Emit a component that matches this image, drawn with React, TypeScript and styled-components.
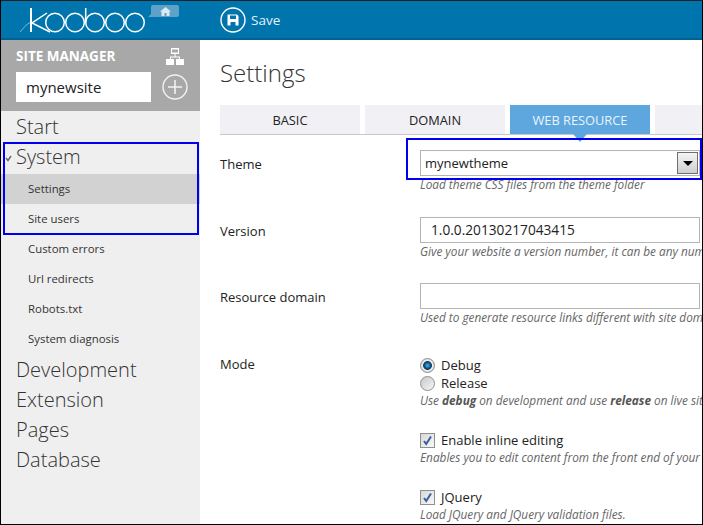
import styled, { createGlobalStyle } from "styled-components";

const GlobalStyle = createGlobalStyle`
  html, body {
    margin: 0;
    padding: 0;
    background: #ffffff;
    font-family: "Open Sans", "Liberation Sans", sans-serif;
  }
  * { box-sizing: border-box; }
`;

const Frame = styled.div`
  position: relative;
  width: 703px;
  height: 525px;
  border: 1px solid #000;
  border-top-color: #222;
  overflow: hidden;
  display: flex;
  flex-direction: column;
`;

const TopBar = styled.header`
  flex: none;
  height: 39px;
  background: #0075ad;
  border-bottom: 2px solid #03618f;
  display: flex;
  align-items: center;
`;

const LogoArea = styled.div`
  position: relative;
  width: 219px;
  height: 100%;
  flex: none;
  padding-left: 19px;
`;

const LogoSvg = styled.svg`
  display: block;
`;

const HomeTag = styled.div`
  position: absolute;
  left: 150px;
  top: 4px;
  width: 28px;
  height: 12px;
  background: #5fa2c9;
  border-radius: 2px;
  display: flex;
  align-items: center;
  justify-content: center;
  &::after {
    content: "";
    position: absolute;
    left: -3px;
    bottom: 0;
    border-bottom: 4px solid #5fa2c9;
    border-left: 4px solid transparent;
  }
`;

const SaveButton = styled.div`
  display: flex;
  align-items: center;
  gap: 5px;
  color: #e6f1f7;
  font-size: 13.5px;
`;

const Body = styled.div`
  flex: 1;
  display: flex;
  min-height: 0;
`;

const Sidebar = styled.aside`
  flex: none;
  width: 199px;
  background: #efefef;
`;

const SiteBox = styled.div`
  height: 71px;
  background: #a8a8a8;
  padding: 9px 0 0 15px;
`;

const SiteHeading = styled.div`
  display: flex;
  align-items: center;
  justify-content: space-between;
  height: 15px;
  padding-right: 16px;
  color: #fff;
  font-size: 13.5px;
  font-weight: 700;
  line-height: 15px;
`;

const SiteRow = styled.div`
  display: flex;
  align-items: center;
  gap: 11px;
  margin-top: 8px;
`;

const SiteName = styled.div`
  flex: none;
  width: 135px;
  height: 30px;
  background: #fff;
  padding-left: 10px;
  color: #222;
  font-size: 15px;
  line-height: 30px;
`;

const Nav = styled.nav`
  display: flex;
  flex-direction: column;
  padding-top: 1px;
`;

const NavTop = styled.div<{ $open?: boolean }>`
  position: relative;
  height: 30px;
  margin-bottom: ${(p) => (p.$open ? 2 : 0)}px;
  padding-left: 15px;
  color: #333;
  font-size: 20px;
  font-weight: 300;
  line-height: 30px;
`;

const OpenMark = styled.svg`
  position: absolute;
  left: 4px;
  top: 13px;
`;

const SubList = styled.div`
  display: flex;
  flex-direction: column;
  padding-bottom: 1px;
`;

const NavSub = styled.div<{ $active?: boolean }>`
  height: 30px;
  padding-left: 27px;
  background: ${(p) => (p.$active ? "#d2d2d2" : "transparent")};
  color: #333;
  font-size: 11.4px;
  line-height: 30px;
`;

const Main = styled.main`
  flex: 1;
  min-width: 0;
  padding: 18px 0 0 20px;
  overflow: hidden;
`;

const PageTitle = styled.h1`
  margin: 0;
  height: 30px;
  color: #333;
  font-size: 24px;
  font-weight: 300;
  line-height: 30px;
`;

const TabBar = styled.div`
  display: flex;
  gap: 5px;
  height: 30px;
  margin-top: 17px;
  border-bottom: 1px solid #c8c8c8;
  width: 520px;
`;

const Tab = styled.div<{ $active?: boolean }>`
  position: relative;
  flex: none;
  width: 140px;
  height: 29px;
  background: ${(p) => (p.$active ? "#5ea7de" : "#f0f0f5")};
  color: ${(p) => (p.$active ? "#eaf4fb" : "#222")};
  font-size: 12.8px;
  line-height: 31px;
  text-align: center;
  ${(p) =>
    p.$active &&
    `&::after {
      content: "";
      position: absolute;
      left: 63px;
      top: 29px;
      border-top: 8px solid #5ea7de;
      border-left: 7px solid transparent;
      border-right: 7px solid transparent;
    }`}
`;

const FieldRow = styled.div<{ $gap: number }>`
  display: grid;
  grid-template-columns: 200px 280px;
  margin-top: ${(p) => p.$gap}px;
`;

const FieldLabel = styled.div<{ $top?: number }>`
  margin-top: ${(p) => p.$top ?? 5}px;
  color: #222;
  font-size: 13px;
  line-height: 18px;
`;

const Control = styled.div`
  display: flex;
  flex-direction: column;
  min-width: 0;
`;

const SelectBox = styled.div`
  display: flex;
  align-items: center;
  justify-content: space-between;
  height: 26px;
  border: 1px solid #b4b4b4;
  background: #fff;
  padding: 0 1px 0 4px;
  color: #222;
  font-size: 13px;
`;

const SelectArrow = styled.div`
  width: 21px;
  height: 22px;
  border: 1px solid #6f6f6f;
  background: linear-gradient(#f4f4f4, #cfcfcf);
  display: flex;
  align-items: center;
  justify-content: center;
  &::after {
    content: "";
    border-top: 5px solid #000;
    border-left: 5px solid transparent;
    border-right: 5px solid transparent;
  }
`;

const TextBox = styled.div`
  height: 26px;
  border: 1px solid #b4b4b4;
  background: #fff;
  padding-left: 10px;
  color: #222;
  font-size: 13.7px;
  line-height: 24px;
`;

const Help = styled.div`
  width: 400px;
  color: #666;
  font-size: 11.8px;
  font-style: italic;
  line-height: 16px;
  white-space: nowrap;
  b {
    color: #555;
  }
`;

const OptionLine = styled.div`
  display: flex;
  align-items: center;
  gap: 6px;
  height: 18px;
  color: #222;
  font-size: 13px;
  white-space: nowrap;
`;

const Radio = styled.span<{ $checked?: boolean }>`
  width: 15px;
  height: 15px;
  border-radius: 50%;
  border: 1px solid #8e8f8f;
  background: ${(p) =>
    p.$checked
      ? "radial-gradient(circle, #2f9fe0 0 1px, #0c4f82 3px, #17395c 4px, #f2f2f2 4.8px, #d4d4d4 7px)"
      : "linear-gradient(135deg, #c8c8c8, #f6f6f6)"};
`;

const Check = styled.span`
  display: flex;
  align-items: center;
  justify-content: center;
  width: 15px;
  height: 15px;
  border: 1px solid #8e8f8f;
  background: linear-gradient(135deg, #d8d8d8, #f8f8f8);
`;

const Highlight = styled.div<{ $l: number; $t: number; $w: number; $h: number }>`
  position: absolute;
  left: ${(p) => p.$l}px;
  top: ${(p) => p.$t}px;
  width: ${(p) => p.$w}px;
  height: ${(p) => p.$h}px;
  border: 2px solid #0000ee;
  pointer-events: none;
`;

const CheckMark = () => (
  <svg width="11" height="11" viewBox="0 0 11 11">
    <path d="M2 6l2.2 3L9 1.5" fill="none" stroke="#3a5f9e" strokeWidth="2" />
  </svg>
);

export default function App() {
  return (
    <>
      <GlobalStyle />
      <Frame>
        <TopBar>
          <LogoArea>
            <LogoSvg width="130" height="36" viewBox="0 0 130 36">
              <g fill="none" stroke="#fff" strokeWidth="1.5">
                <path d="M11 7 V31" strokeWidth="2" />
                <path d="M27 12 L12 22 L30 31" />
                <path d="M0 31 Q6 23 12 20" strokeWidth="0.8" opacity="0.6" />
                <circle cx="35" cy="21.5" r="9.3" />
                <circle cx="55" cy="21.5" r="9.3" />
                <path d="M65.7 7 V21.5" />
                <circle cx="75" cy="21.5" r="9.3" />
                <circle cx="95" cy="21.5" r="9.3" />
                <circle cx="115" cy="21.5" r="9.3" />
              </g>
            </LogoSvg>
            <HomeTag>
              <svg width="11" height="9" viewBox="0 0 11 9">
                <path d="M5.5 0L11 4.5H9.5V9H6.5V6H4.5V9H1.5V4.5H0z" fill="#dbe9f2" />
              </svg>
            </HomeTag>
          </LogoArea>
          <SaveButton>
            <svg width="26" height="26" viewBox="0 0 26 26">
              <circle cx="13" cy="13" r="12" fill="none" stroke="#fff" strokeWidth="1.4" />
              <path
                d="M7.5 7.5H17L18.5 9V18.5H7.5z M10 8.5V12H16V8.5z M10.5 15V18.5H15.5V15z"
                fill="#fff"
                fillRule="evenodd"
              />
            </svg>
            Save
          </SaveButton>
        </TopBar>
        <Body>
          <Sidebar>
            <SiteBox>
              <SiteHeading>
                SITE MANAGER
                <svg width="18" height="17" viewBox="0 0 18 17">
                  <g fill="#fff">
                    <path d="M5 0H13V6H5zM6 1.5V4.5H12V1.5z" fillRule="evenodd" />
                    <path d="M8.5 6H9.5V8.5H14V11H13V9.5H5V11H4V8.5H8.5z" />
                    <rect x="0" y="11" width="8" height="6" />
                    <rect x="10" y="11" width="8" height="6" />
                  </g>
                </svg>
              </SiteHeading>
              <SiteRow>
                <SiteName>mynewsite</SiteName>
                <svg width="26" height="26" viewBox="0 0 26 26">
                  <circle cx="13" cy="13" r="12" fill="none" stroke="#f2f2f2" strokeWidth="1.4" />
                  <path d="M13 6V20M6 13H20" stroke="#f2f2f2" strokeWidth="1.6" />
                </svg>
              </SiteRow>
            </SiteBox>
            <Nav>
              <NavTop>Start</NavTop>
              <NavTop $open>
                <OpenMark width="7" height="7" viewBox="0 0 7 7">
                  <path d="M1 3l2 2.5L6 1" fill="none" stroke="#666" strokeWidth="1.4" />
                </OpenMark>
                System
              </NavTop>
              <SubList>
                <NavSub $active>Settings</NavSub>
                <NavSub>Site users</NavSub>
                <NavSub>Custom errors</NavSub>
                <NavSub>Url redirects</NavSub>
                <NavSub>Robots.txt</NavSub>
                <NavSub>System diagnosis</NavSub>
              </SubList>
              <NavTop>Development</NavTop>
              <NavTop>Extension</NavTop>
              <NavTop>Pages</NavTop>
              <NavTop>Database</NavTop>
            </Nav>
          </Sidebar>
          <Main>
            <PageTitle>Settings</PageTitle>
            <TabBar>
              <Tab>BASIC</Tab>
              <Tab>DOMAIN</Tab>
              <Tab $active>WEB RESOURCE</Tab>
              <Tab />
            </TabBar>
            <FieldRow $gap={15}>
              <FieldLabel>Theme</FieldLabel>
              <Control>
                <SelectBox>
                  mynewtheme
                  <SelectArrow />
                </SelectBox>
                <Help>Load theme CSS files from the theme folder</Help>
              </Control>
            </FieldRow>
            <FieldRow $gap={25}>
              <FieldLabel>Version</FieldLabel>
              <Control>
                <TextBox>1.0.0.20130217043415</TextBox>
                <Help>Give your website a version number, it can be any number</Help>
              </Control>
            </FieldRow>
            <FieldRow $gap={24}>
              <FieldLabel>Resource domain</FieldLabel>
              <Control>
                <TextBox />
                <Help>Used to generate resource links different with site domain</Help>
              </Control>
            </FieldRow>
            <FieldRow $gap={31}>
              <FieldLabel $top={-1}>Mode</FieldLabel>
              <Control>
                <OptionLine>
                  <Radio $checked />
                  Debug
                </OptionLine>
                <OptionLine>
                  <Radio />
                  Release
                </OptionLine>
                <Help>
                  Use <b>debug</b> on development and use <b>release</b> on live site
                </Help>
              </Control>
            </FieldRow>
            <FieldRow $gap={23}>
              <div />
              <Control>
                <OptionLine>
                  <Check>
                    <CheckMark />
                  </Check>
                  Enable inline editing
                </OptionLine>
                <Help>Enables you to edit content from the front end of your site</Help>
              </Control>
            </FieldRow>
            <FieldRow $gap={23}>
              <div />
              <Control>
                <OptionLine>
                  <Check>
                    <CheckMark />
                  </Check>
                  JQuery
                </OptionLine>
                <Help>Load JQuery and JQuery validation files.</Help>
              </Control>
            </FieldRow>
          </Main>
        </Body>
        <Highlight $l={2} $t={141} $w={196} $h={93} />
        <Highlight $l={405} $t={137} $w={296} $h={42} />
      </Frame>
    </>
  );
}
